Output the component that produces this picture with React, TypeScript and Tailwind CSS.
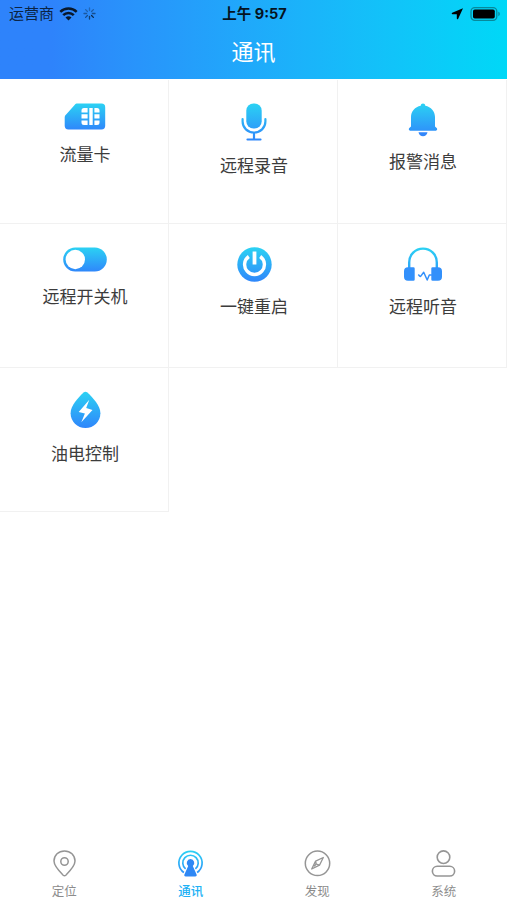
import type { ReactNode } from 'react';

function GradientDefs({ height }: { height: number }) {
  return (
    <defs>
      <linearGradient id={`fade-${height}`} gradientUnits="userSpaceOnUse" x1="0" y1="0" x2="0" y2={height}>
        <stop offset="0" stopColor="#2bd3f3" />
        <stop offset="1" stopColor="#2f86fb" />
      </linearGradient>
    </defs>
  );
}

function SimIcon() {
  return (
    <svg width="42" height="27" viewBox="0 0 42 27" fill="none">
      <GradientDefs height={27} />
      <path
        d="M13.5.5H37.5a3.7 3.7 0 0 1 3.7 3.7v18.6a3.7 3.7 0 0 1-3.7 3.7H4.4A3.7 3.7 0 0 1 .7 22.8V14.5c0-1.2.4-2 1.2-2.8L10.6 1.9C11.4 1 12.3.5 13.5.5Z"
        fill="url(#fade-27)"
      />
      <path
        d="M20 5h3.600v4.500H17.500V7.500A2.500 2.500 0 0 1 20 5ZM17.500 11.300h6.100v4.300h-6.100ZM17.500 17.400h6.100v4.600H20a2.500 2.500 0 0 1-2.500-2.500ZM25.300 5h3.400v17h-3.400ZM30.400 5H33a2.500 2.500 0 0 1 2.500 2.500v2h-5.100ZM30.400 11.300h5.100v4.300h-5.100ZM30.400 17.400h5.100v2.100A2.500 2.500 0 0 1 33 22h-2.600Z"
        fill="#fff"
      />
    </svg>
  );
}

function MicIcon() {
  return (
    <svg width="26" height="38" viewBox="0 0 26 38" fill="none">
      <GradientDefs height={38} />
      <rect x="5.300" y="0.500" width="15.400" height="25" rx="7.200" fill="url(#fade-38)" />
      <path
        d="M1.600 16v2.500c0 6.300 5 11 11.400 11s11.400-4.700 11.400-11V16M13 29.500v7M6.500 36.500h13"
        stroke="url(#fade-38)"
        strokeWidth="2.200"
        strokeLinecap="round"
      />
    </svg>
  );
}

function BellIcon() {
  return (
    <svg width="30" height="34" viewBox="0 0 30 34" fill="none">
      <GradientDefs height={34} />
      <path
        d="M15 .4c1.300 0 2.100.9 2.300 2.300 5.700 1.100 9.700 5.700 9.700 11.300v9.500l1.700 1.600c.9.9.5 2.600-.8 2.600H2.100c-1.300 0-1.700-1.700-.8-2.600L3 23.500V14c0-5.600 4-10.200 9.700-11.300.2-1.400 1-2.300 2.300-2.300Z"
        fill="url(#fade-34)"
      />
      <path d="M10.500 29.200h9c-.5 2.500-2.300 4-4.500 4s-4-1.500-4.500-4Z" fill="#3186fa" />
    </svg>
  );
}

function SwitchIcon() {
  return (
    <svg width="44" height="25" viewBox="0 0 44 25" fill="none">
      <GradientDefs height={25} />
      <rect x="0.200" y="0.500" width="43.600" height="24" rx="12" fill="url(#fade-25)" />
      <circle cx="12.300" cy="12.500" r="9.700" fill="#fff" />
    </svg>
  );
}

function PowerIcon() {
  return (
    <svg width="35" height="35" viewBox="0 0 35 35" fill="none">
      <GradientDefs height={35} />
      <circle cx="17.500" cy="17.500" r="17.200" fill="url(#fade-35)" />
      <path d="M11.800 9.500a9.900 9.900 0 1 0 11.400 0" stroke="#fff" strokeWidth="3.400" />
      <path d="M17.500 4.500v13" stroke="#fff" strokeWidth="3.800" />
    </svg>
  );
}

function HeadphonesIcon() {
  return (
    <svg width="40" height="35" viewBox="0 0 40 35" fill="none">
      <GradientDefs height={36} />
      <path
        d="M6.200 21V15.500C6.200 7.700 12.200 1.600 20 1.600s13.800 6.100 13.800 13.900V21"
        stroke="url(#fade-36)"
        strokeWidth="2.400"
      />
      <path
        d="M5 20.300h5.400a1.300 1.300 0 0 1 1.300 1.300v10.900a1.300 1.300 0 0 1-1.300 1.300H5a4 4 0 0 1-4-4v-5.500a4 4 0 0 1 4-4ZM29.600 20.300H35a4 4 0 0 1 4 4v5.500a4 4 0 0 1-4 4h-5.400a1.300 1.300 0 0 1-1.300-1.300V21.600a1.300 1.300 0 0 1 1.300-1.300Z"
        fill="#3290fb"
      />
      <path
        d="m15.300 27.500 1.500 1.700q.6.500 1-.1l2.900-3.800 3.500 7.700 2.100-5h2.500"
        stroke="#3290fb"
        strokeWidth="1.500"
        strokeLinejoin="round"
      />
    </svg>
  );
}

function DropIcon() {
  return (
    <svg width="31" height="38" viewBox="0 0 31 38" fill="none">
      <GradientDefs height={37} />
      <path
        d="M13.600 1.600c1.200-1.100 2.600-1.100 3.800 0C23 6.900 30.400 14.800 30.400 22.300c0 8.300-6.600 14.800-14.900 14.800S.6 30.600.6 22.300C.6 14.800 8 6.900 13.600 1.600Z"
        fill="url(#fade-37)"
      />
      <path d="M19.300 8.800 8.700 21.100l6.200 1.300-3.600 8.900 11.200-12.400-6.300-1.900Z" fill="#fff" />
    </svg>
  );
}

function PinIcon() {
  return (
    <svg width="27" height="27" viewBox="0 0 27 27" fill="none" stroke="#959595" strokeWidth="1.500">
      <path d="M14.800 25.200c4.300-4.200 9.200-9.100 9.200-14.100C24 5.200 19.400.9 13.500.9S3 5.200 3 11.100c0 5 4.900 9.900 9.200 14.100q1.300 1.200 2.600 0Z" />
      <circle cx="13.500" cy="11.500" r="3.700" />
    </svg>
  );
}

function BroadcastIcon() {
  return (
    <svg width="27" height="27" viewBox="0 0 27 27" fill="none">
      <GradientDefs height={28} />
      <path
        d="M6.900 22.500A11.600 11.600 0 1 1 20.100 22.500M8.600 18.900a7.700 7.700 0 1 1 9.800 0"
        stroke="url(#fade-28)"
        strokeWidth="1.700"
      />
      <path
        d="M13.500 9.100a3.800 3.800 0 0 1 2.300 6.800l3.800 8.500c.4 1-.2 2-1.300 2H8.700c-1.100 0-1.700-1-1.300-2l3.800-8.500a3.800 3.800 0 0 1 2.300-6.800Z"
        fill="#2f88f5"
        stroke="#fff"
        strokeWidth="1.400"
        paintOrder="stroke"
      />
    </svg>
  );
}

function CompassIcon() {
  return (
    <svg width="27" height="27" viewBox="0 0 27 27" fill="none" stroke="#959595" strokeWidth="1.500" strokeLinejoin="round">
      <circle cx="13.500" cy="13.300" r="12.200" />
      <path d="m19.300 7.500-7.700 3.600-3.900 7.900 7.800-3.800ZM11.600 11.100l.6 2.900 3.300 1.200M12.200 14l-2 2.400" strokeWidth="1.300" />
    </svg>
  );
}

function PersonIcon() {
  return (
    <svg width="27" height="27" viewBox="0 0 27 27" fill="none" stroke="#959595" strokeWidth="1.600">
      <circle cx="13.500" cy="7.200" r="6.300" />
      <rect x="2.400" y="16.300" width="22.200" height="9.700" rx="4.800" />
    </svg>
  );
}

function WifiIcon() {
  return (
    <svg width="19" height="14" viewBox="0 0 19 14" fill="none" stroke="#09182b" strokeWidth="2.500">
      <path d="M1.300 4.800a11.700 11.700 0 0 1 16.400 0M4.200 8.200a7.500 7.500 0 0 1 10.600 0" />
      <path d="M9.500 13.600 6.500 10.600a4.300 4.300 0 0 1 6 0Z" fill="#09182b" stroke="none" />
    </svg>
  );
}

// spokes run from faint to dark, clockwise
const spokes = [0.35, 0.45, 0.6, 0.95, 0.75, 0.6, 0.5, 0.4];

function Spinner() {
  return (
    <svg width="13" height="13" viewBox="0 0 13 13" stroke="#0b2747" strokeWidth="1.300" strokeLinecap="round">
      {spokes.map((opacity, i) => (
        <path key={i} d="M6.500 3.600V1" opacity={opacity} transform={`rotate(${i * 45} 6.500 6.500)`} />
      ))}
    </svg>
  );
}

function StatusBar() {
  return (
    <div className="grid h-[27px] grid-cols-3 items-center pr-[7px] pl-[9px] text-black">
      <div className="flex items-center">
        <span className="text-[15px] leading-none text-[#0b2444]">运营商</span>
        <span className="ml-[5px]">
          <WifiIcon />
        </span>
        <span className="ml-[5px]">
          <Spinner />
        </span>
      </div>
      <span className="pt-0.5 text-center text-[14.5px] leading-none font-bold text-[#05131f]">上午 9:57</span>
      <div className="flex items-center justify-end gap-[6px]">
        <svg width="13" height="13" viewBox="0 0 13 13">
          <path d="M12 1.200 1.200 5.800c-.8.400-.6 1.400.3 1.400H5.800v4.200c0 .9 1 1.100 1.400.3Z" fill="#000" />
        </svg>
        <svg width="30" height="14" viewBox="0 0 30 14" fill="none">
          <rect x="1" y="0.700" width="25.800" height="12.600" rx="3.800" stroke="#07899b" strokeWidth="1.300" />
          <rect x="3" y="2.500" width="21.800" height="9" rx="1.800" fill="#000" />
          <path d="M28.300 4.800c2 .6 2 3.800 0 4.400Z" fill="#07899b" />
        </svg>
      </div>
    </div>
  );
}

type Entry = { label: string; icon: ReactNode };

const features: Entry[] = [
  { label: '流量卡', icon: <SimIcon /> },
  { label: '远程录音', icon: <MicIcon /> },
  { label: '报警消息', icon: <BellIcon /> },
  { label: '远程开关机', icon: <SwitchIcon /> },
  { label: '一键重启', icon: <PowerIcon /> },
  { label: '远程听音', icon: <HeadphonesIcon /> },
  { label: '油电控制', icon: <DropIcon /> },
];

const tabs: Entry[] = [
  { label: '定位', icon: <PinIcon /> },
  { label: '通讯', icon: <BroadcastIcon /> },
  { label: '发现', icon: <CompassIcon /> },
  { label: '系统', icon: <PersonIcon /> },
];

export default function App() {
  const activeTab = '通讯';

  return (
    <div className="flex h-[900px] w-full flex-col bg-white font-['Inter','Noto_Sans_CJK_SC',sans-serif]">
      <header className="h-[79px] shrink-0 bg-linear-to-r from-[#2e83fb] from-10% to-[#00d8f7]">
        <StatusBar />
        <h1 className="text-center text-[22px] leading-[50px] text-white">通讯</h1>
      </header>

      <main className="grid flex-1 auto-rows-[144px] grid-cols-[169px_169px_169px] content-start pt-px">
        {features.map((f) => (
          <button
            key={f.label}
            className="flex flex-col items-center border-r border-b border-[#f1f1f1] pt-[23px] pl-[2px]"
          >
            {f.icon}
            <span className="mt-[13px] text-[17px] leading-6 text-[#3c3c3c]">{f.label}</span>
          </button>
        ))}
      </main>

      <nav className="grid h-[51px] shrink-0 grid-cols-4 pl-px">
        {tabs.map((t) => (
          <button key={t.label} className="flex flex-col items-center pt-px">
            {t.icon}
            <span
              className={`mt-[6.5px] text-[12.5px] leading-4 ${t.label === activeTab ? 'font-medium text-[#20b1f5]' : 'text-[#8c8c8c]'}`}
            >
              {t.label}
            </span>
          </button>
        ))}
      </nav>
    </div>
  );
}
